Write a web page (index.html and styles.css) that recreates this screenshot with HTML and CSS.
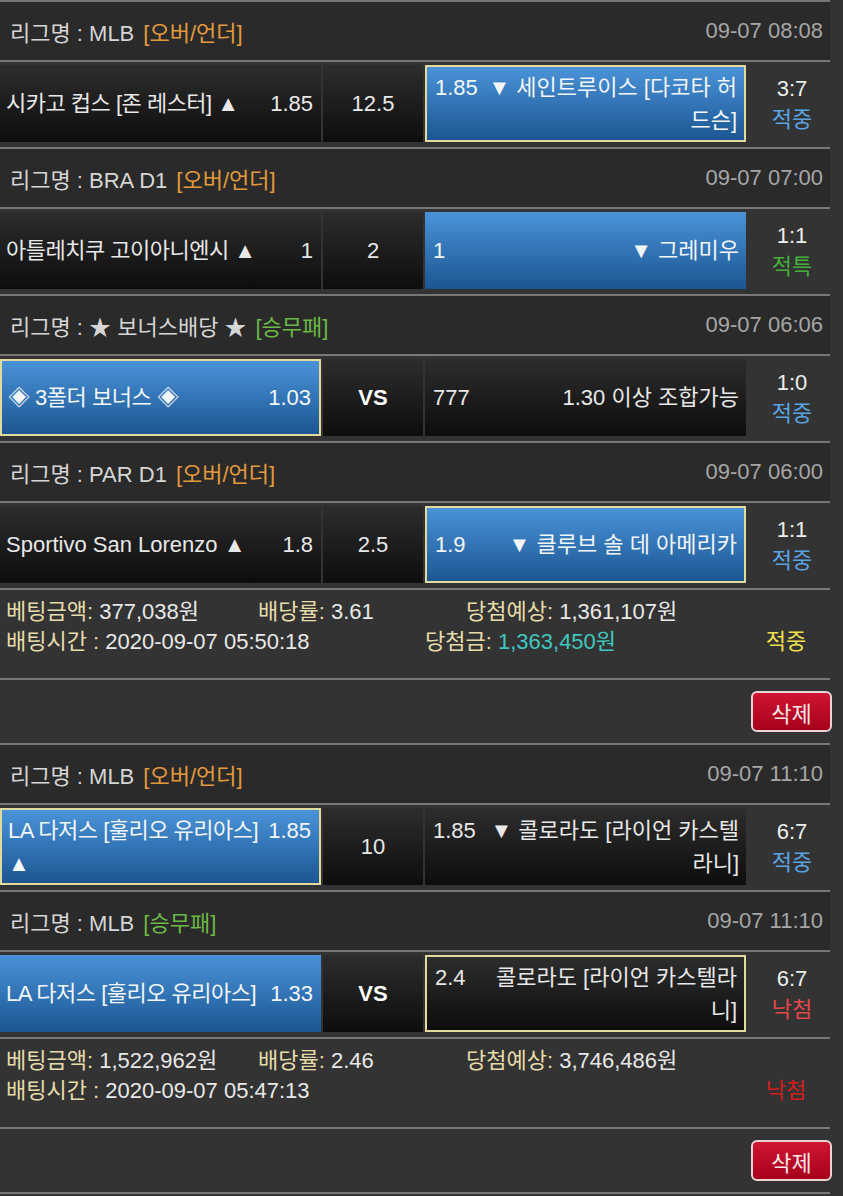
FILE: index.html
```html
<!DOCTYPE html>
<html lang="ko">
<head>
  <meta charset="UTF-8">
  <title>배팅내역</title>
  <meta name="viewport" content="width=device-width, initial-scale=1.0">
  <link rel="stylesheet" href="styles.css">
</head>
<body>
  <div class="list">
    <div class="league">
      <span>리그명 : MLB<span class="tag ou">[오버/언더]</span></span>
      <span class="date">09-07 08:08</span>
    </div>
    <div class="match">
      <div class="cell home"><div class="in"><span class="odds">1.85</span>시카고 컵스 [존 레스터] ▲</div></div>
      <div class="cell line">12.5</div>
      <div class="cell away win pick"><div class="in"><span class="odds">1.85</span>▼ 세인트루이스 [다코타 허드슨]</div></div>
      <div class="score">3:7<span class="hit">적중</span></div>
    </div>

    <div class="league">
      <span>리그명 : BRA D1<span class="tag ou">[오버/언더]</span></span>
      <span class="date">09-07 07:00</span>
    </div>
    <div class="match">
      <div class="cell home"><div class="in"><span class="odds">1</span>아틀레치쿠 고이아니엔시 ▲</div></div>
      <div class="cell line">2</div>
      <div class="cell away win"><div class="in"><span class="odds">1</span>▼ 그레미우</div></div>
      <div class="score">1:1<span class="void">적특</span></div>
    </div>

    <div class="league">
      <span>리그명 : ★ 보너스배당 ★<span class="tag wdl">[승무패]</span></span>
      <span class="date">09-07 06:06</span>
    </div>
    <div class="match">
      <div class="cell home win pick"><div class="in"><span class="odds">1.03</span>◈ 3폴더 보너스 ◈</div></div>
      <div class="cell line vs">VS</div>
      <div class="cell away"><div class="in"><span class="odds">777</span>1.30 이상 조합가능</div></div>
      <div class="score">1:0<span class="hit">적중</span></div>
    </div>

    <div class="league">
      <span>리그명 : PAR D1<span class="tag ou">[오버/언더]</span></span>
      <span class="date">09-07 06:00</span>
    </div>
    <div class="match">
      <div class="cell home"><div class="in latin"><span class="odds">1.8</span>Sportivo San Lorenzo ▲</div></div>
      <div class="cell line">2.5</div>
      <div class="cell away win pick"><div class="in"><span class="odds">1.9</span>▼ 클루브 솔 데 아메리카</div></div>
      <div class="score">1:1<span class="hit">적중</span></div>
    </div>

    <div class="summary">
      <div class="sum-line">
        <span class="c1"><span class="k">베팅금액:</span> 377,038원</span>
        <span class="c2"><span class="k">배당률:</span> 3.61</span>
        <span><span class="k">당첨예상:</span> 1,361,107원</span>
      </div>
      <div class="sum-line">
        <span class="c-time"><span class="k">배팅시간 :</span> 2020-09-07 05:50:18</span>
        <span class="c-win"><span class="k">당첨금:</span> <span class="paid">1,363,450원</span></span>
        <span class="result won">적중</span>
      </div>
    </div>
    <div class="actions"><button class="del">삭제</button></div>

    <div class="league">
      <span>리그명 : MLB<span class="tag ou">[오버/언더]</span></span>
      <span class="date">09-07 11:10</span>
    </div>
    <div class="match">
      <div class="cell home win pick"><div class="in"><span class="odds">1.85</span>LA 다저스 [훌리오 유리아스] ▲</div></div>
      <div class="cell line">10</div>
      <div class="cell away"><div class="in"><span class="odds">1.85</span>▼ 콜로라도 [라이언 카스텔라니]</div></div>
      <div class="score">6:7<span class="hit">적중</span></div>
    </div>

    <div class="league">
      <span>리그명 : MLB<span class="tag wdl">[승무패]</span></span>
      <span class="date">09-07 11:10</span>
    </div>
    <div class="match">
      <div class="cell home win"><div class="in"><span class="odds">1.33</span>LA 다저스 [훌리오 유리아스]</div></div>
      <div class="cell line vs">VS</div>
      <div class="cell away pick"><div class="in"><span class="odds">2.4</span>콜로라도 [라이언 카스텔라니]</div></div>
      <div class="score">6:7<span class="miss">낙첨</span></div>
    </div>

    <div class="summary">
      <div class="sum-line">
        <span class="c1"><span class="k">베팅금액:</span> 1,522,962원</span>
        <span class="c2"><span class="k">배당률:</span> 2.46</span>
        <span><span class="k">당첨예상:</span> 3,746,486원</span>
      </div>
      <div class="sum-line">
        <span class="c-time"><span class="k">배팅시간 :</span> 2020-09-07 05:47:13</span>
        <span class="c-win"></span>
        <span class="result lost">낙첨</span>
      </div>
    </div>
    <div class="actions"><button class="del">삭제</button></div>
  </div>
</body>
</html>
```

FILE: styles.css
```css
body {
  margin: 0;
  background: #333;
  font-family: "Liberation Sans", "Noto Sans CJK KR", sans-serif;
  font-size: 22px;
  color: #e8e8e8;
  font-feature-settings: "palt";
}
.list {
  width: 830px;
  border-top: 2px solid #777;
}
.league {
  height: 58px;
  display: flex;
  align-items: center;
  justify-content: space-between;
  padding: 0 7px 0 10px;
  background: #2a2a2a;
  color: #d6d6d6;
  border-bottom: 2px solid #777;
}
.tag {
  margin-left: 9px;
}
.ou {
  color: #e39a3c;
}
.wdl {
  color: #6cb846;
}
.date {
  color: #a6a6a6;
}
.match {
  display: flex;
  gap: 2px;
  height: 87px;
  box-sizing: border-box;
  padding: 3px 0 5px;
  border-bottom: 2px solid #777;
}
.cell {
  display: flex;
  align-items: center;
  box-sizing: border-box;
  line-height: 33px;
  background: linear-gradient(#2d2d2d, #0d0d0d);
}
.home, .away {
  width: 321px;
}
.home {
  padding: 0 8px 0 6px;
}
.away {
  padding: 0 7px 0 8px;
  text-align: right;
}
.in {
  flex: 1;
  display: flow-root;
}
.home .in {
  letter-spacing: -0.5px;
}
.home .in.latin {
  letter-spacing: 0;
}
.odds {
  letter-spacing: 0;
}
.home .odds {
  float: right;
  margin-left: 4px;
}
.away .odds {
  float: left;
  margin-right: 10px;
}
.line {
  width: 100px;
  justify-content: center;
}
.vs {
  font-weight: bold;
  color: #fff;
}
.win {
  background: linear-gradient(#4a93d8, #1b5692);
  color: #f2f6fa;
}
.pick {
  border: 2px solid #e2d99c;
}
.score {
  flex: 1;
  display: flex;
  flex-direction: column;
  align-items: center;
  justify-content: center;
  padding-left: 6px;
  line-height: 31px;
  color: #eee;
}
.hit {
  color: #5aa2e2;
}
.void {
  color: #45ad3c;
}
.miss {
  color: #e24848;
}
.summary {
  padding: 7px 0 21px 6px;
  line-height: 30px;
  border-bottom: 2px solid #777;
}
.sum-line {
  display: flex;
}
.k {
  color: #e6dcaa;
}
.c1 {
  width: 252px;
}
.c2 {
  width: 208px;
}
.c-time {
  width: 419px;
}
.c-win {
  width: 323px;
}
.paid {
  color: #3fc7bf;
}
.result {
  width: 76px;
  text-align: center;
}
.won {
  color: #eee04c;
}
.lost {
  color: #d21e1e;
}
.actions {
  height: 63px;
  display: flex;
  align-items: center;
  justify-content: flex-end;
  border-bottom: 2px solid #777;
}
.del {
  width: 81px;
  height: 41px;
  margin-right: -2px;
  border: 2px solid #ecd3d3;
  border-radius: 6px;
  background: linear-gradient(#cf1532, #a6001b);
  color: #fbe8e8;
  font-family: inherit;
  font-size: 22px;
  cursor: pointer;
}
```
